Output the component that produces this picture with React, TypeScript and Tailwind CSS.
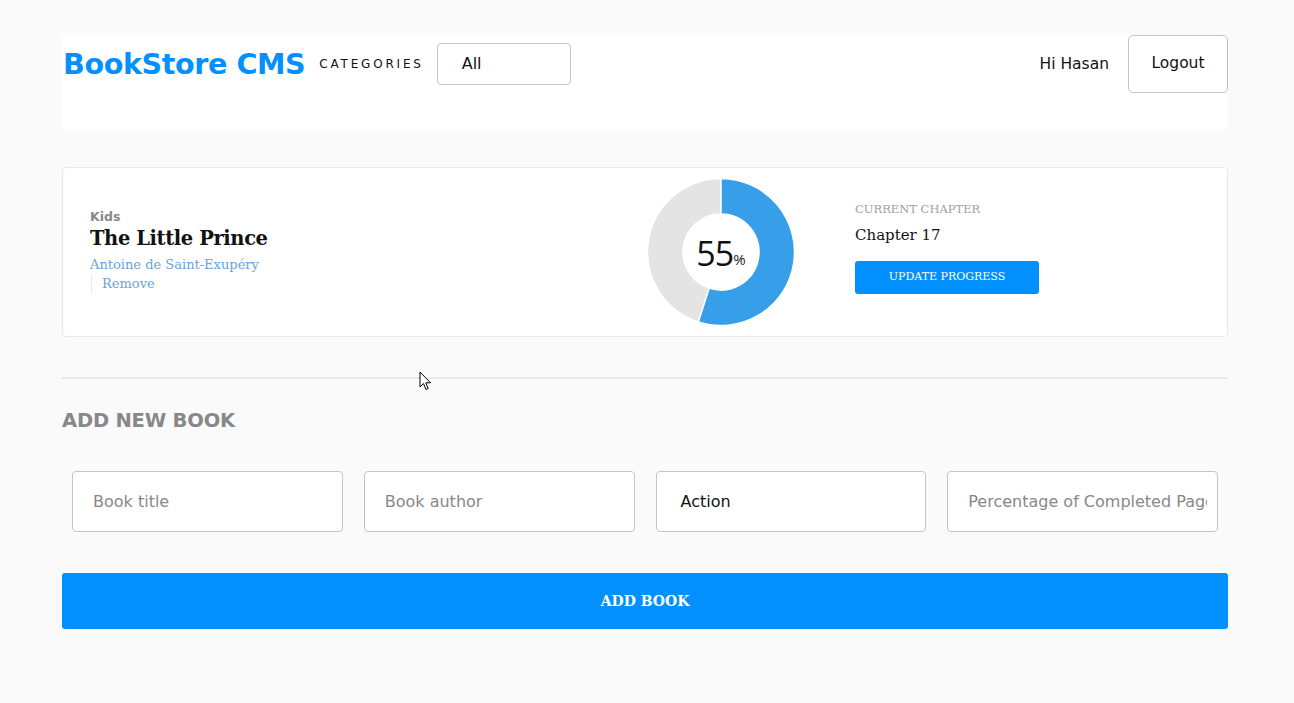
import React from "react";

function arcPath(cx: number, cy: number, r1: number, r2: number, a0: number, a1: number) {
  const p = (r: number, a: number) => {
    const rad = ((a - 90) * Math.PI) / 180;
    return [cx + r * Math.cos(rad), cy + r * Math.sin(rad)];
  };
  const large = a1 - a0 > 180 ? 1 : 0;
  const [x0, y0] = p(r2, a0);
  const [x1, y1] = p(r2, a1);
  const [x2, y2] = p(r1, a1);
  const [x3, y3] = p(r1, a0);
  return `M${x0} ${y0} A${r2} ${r2} 0 ${large} 1 ${x1} ${y1} L${x2} ${y2} A${r1} ${r1} 0 ${large} 0 ${x3} ${y3} Z`;
}

function Donut({ pct }: { pct: number }) {
  const end = (pct / 100) * 360;
  return (
    <div className="relative w-[148px] h-[148px]">
      <svg width="148" height="148" viewBox="0 0 148 148">
        <path d={arcPath(74, 74, 38, 73.5, end, 360)} fill="#e4e4e4" stroke="#fff" strokeWidth="1.5" />
        <path d={arcPath(74, 74, 38, 73.5, 0, end)} fill="#379fea" stroke="#fff" strokeWidth="1.5" />
      </svg>
      <div className="absolute inset-0 flex items-center justify-center pt-[2px] font-['Open_Sans',sans-serif]">
        <span className="text-[34px] leading-none text-[#111] tracking-[-1px]">55</span>
        <span className="text-[15px] leading-none text-[#222] mt-[12px]">%</span>
      </div>
    </div>
  );
}

const inputCls =
  "w-[271px] h-[61px] bg-white border border-[#c4c4c4] rounded-[4px] pl-[20px] pr-[10px] text-[16px] text-[#121212] placeholder:text-[#888] outline-none font-['DejaVu_Sans',sans-serif]";

export default function App() {
  return (
    <div className="min-h-[703px] bg-[#fafafa] relative font-['DejaVu_Sans',sans-serif]">
      <div className="w-[1166px] ml-[62px] pt-[35px]">
        {/* header */}
        <header className="bg-white h-[94px] flex items-start justify-between">
          <div className="flex items-center h-[58px]">
            <h1 className="text-[#0290ff] text-[28.6px] font-bold leading-none tracking-[-0.4px] ml-[1px]">
              BookStore CMS
            </h1>
            <span className="ml-[14px] text-[12px] tracking-[2.8px] text-[#121212]">CATEGORIES</span>
            <div className="ml-[13px] w-[134px] h-[42px] border border-[#c4c4c4] rounded-[4px] flex items-center pl-[24px] text-[16px] text-[#121212]">
              All
            </div>
          </div>
          <div className="flex items-start">
            <span className="mt-[18px] text-[15.5px] text-[#121212]">Hi Hasan</span>
            <button className="ml-[19px] w-[100px] h-[58px] border border-[#c4c4c4] rounded-[5px] text-[15.5px] text-[#121212] bg-white">
              Logout
            </button>
          </div>
        </header>

        {/* book card */}
        <div className="mt-[38px] h-[170px] bg-white border border-[#e8e8e8] rounded-[4px] flex items-center">
          <div className="w-[556px] pl-[27px] pb-[2px]">
            <div className="text-[12.5px] font-bold text-[#888] leading-[14px]">Kids</div>
            <div className="text-[19.5px] font-bold text-[#121212] leading-[28px] mt-[1px] tracking-[-0.4px] font-['DejaVu_Serif',serif]">
              The Little Prince
            </div>
            <div className="text-[13px] text-[#6aa3e0] leading-[18px] mt-[3px] font-['DejaVu_Serif',serif]">
              Antoine de Saint-Exupéry
            </div>
            <div className="mt-[1px] border-l border-[#e8e8e8] pl-[10px] ml-[1px] text-[13px] text-[#6aa3e0] leading-[18px] font-['DejaVu_Serif',serif]">
              Remove
            </div>
          </div>
          <div className="ml-[28px]">
            <Donut pct={55} />
          </div>
          <div className="ml-[60px] pb-[8px] font-['DejaVu_Serif',serif]">
            <div className="text-[11.5px] text-[#a0a0a0] leading-[14px]">CURRENT CHAPTER</div>
            <div className="text-[15px] text-[#121212] leading-[20px] mt-[9px]">Chapter 17</div>
            <button className="mt-[16px] w-[184px] h-[33px] bg-[#0290ff] rounded-[3px] text-white text-[11px] font-light">
              UPDATE PROGRESS
            </button>
          </div>
        </div>

        {/* divider */}
        <div className="mt-[40px] h-[2px] bg-[#e8e8e8]" />

        <h2 className="mt-[30px] text-[19.5px] font-bold text-[#888] leading-[24px] tracking-[-0.2px]">ADD NEW BOOK</h2>

        <form className="mt-[38px] flex gap-[21px] px-[10px]">
          <input placeholder="Book title" className={inputCls} />
          <input placeholder="Book author" className={inputCls} />
          <div className="w-[271px] h-[61px] bg-white border border-[#c4c4c4] rounded-[4px] pl-[24px] flex items-center text-[16px] text-[#121212]">
            Action
          </div>
          <input placeholder="Percentage of Completed Pages" className={inputCls} />
        </form>

        <button className="mt-[41px] w-full h-[56px] bg-[#0290ff] rounded-[3px] text-white text-[14px] font-bold font-['DejaVu_Serif',serif]">
          ADD BOOK
        </button>
      </div>

      {/* mouse cursor */}
      <svg className="absolute left-[419px] top-[371px]" width="13" height="20" viewBox="0 0 13 20">
        <path d="M1 1 L1 16 L4.5 12.5 L7 18.5 L9.2 17.5 L6.8 11.8 L11.5 11.8 Z" fill="#fff" stroke="#000" strokeWidth="1" strokeLinejoin="round" />
      </svg>
    </div>
  );
}
